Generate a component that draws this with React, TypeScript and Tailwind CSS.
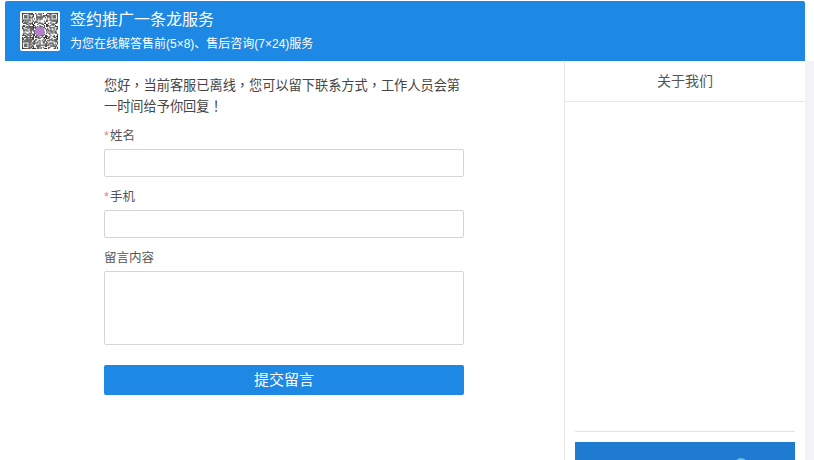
const QR_SIZE = 33;

function isFinder(x: number, y: number) {
  const inBox = (bx: number, by: number) => x >= bx && x < bx + 7 && y >= by && y < by + 7;
  return inBox(0, 0) || inBox(QR_SIZE - 7, 0) || inBox(0, QR_SIZE - 7);
}

function finderOn(x: number, y: number) {
  const lx = x >= QR_SIZE - 7 ? x - (QR_SIZE - 7) : x;
  const ly = y >= QR_SIZE - 7 ? y - (QR_SIZE - 7) : y;
  if (lx === 0 || lx === 6 || ly === 0 || ly === 6) return true;
  return lx >= 2 && lx <= 4 && ly >= 2 && ly <= 4;
}

// stand-in modules, the reference code is too blurry to read
function moduleOn(x: number, y: number) {
  const n = Math.sin(x * 12.9898 + y * 78.233) * 43758.5453;
  return n - Math.floor(n) < 0.55;
}

function QrCode() {
  const cells: { x: number; y: number }[] = [];
  for (let y = 0; y < QR_SIZE; y++) {
    for (let x = 0; x < QR_SIZE; x++) {
      const on = isFinder(x, y) ? finderOn(x, y) : moduleOn(x, y);
      if (on) cells.push({ x, y });
    }
  }
  return (
    <div className="h-10 w-10 shrink-0 rounded-[2px] bg-white p-[2px]">
      <svg viewBox="0 0 33 33" className="h-9 w-9 blur-[0.3px]">
        {cells.map((c) => (
          <rect key={`${c.x}-${c.y}`} x={c.x} y={c.y} width={1} height={1} fill="#2e2e2e" />
        ))}
        <rect x={12.5} y={13} width={8} height={7.5} rx={1.5} fill="#b57fd0" />
      </svg>
    </div>
  );
}

function Field({ label, required }: { label: string; required?: boolean }) {
  return (
    <div className="mb-[11px]">
      <label className="block h-[22px] text-[12.5px] leading-[18px] text-[#555]">
        {required && <span className="inline-block w-[6px] text-[#c98a8a]">*</span>}
        {label}
      </label>
      <input className="block h-7 w-[360px] rounded-[2px] border border-[#d5d5d9] bg-white" />
    </div>
  );
}

export default function App() {
  return (
    <div
      className="flex h-[460px] w-[814px] flex-col overflow-hidden bg-white pt-px"
      style={{ fontFamily: '"Liberation Sans", "Noto Sans CJK SC", sans-serif' }}
    >
      <div className="flex flex-1 flex-col pl-[5px]">
        <div className="flex min-h-0 flex-1 flex-col">
          <header className="mr-[9px] flex h-[60px] shrink-0 items-center gap-[10px] rounded-t-[2px] bg-[#1e88e5] pl-[15px] text-white">
            <QrCode />
            <div className="-mt-[2px]">
              <h1 className="text-[16px] leading-[22px] font-normal">签约推广一条龙服务</h1>
              <p className="mt-[5px] text-[12px] leading-4">
                为您在线解答售前(5×8)、售后咨询(7×24)服务
              </p>
            </div>
          </header>

          <div className="flex min-h-0 flex-1">
            <main className="w-[559px] shrink-0 pt-[13px] pl-[99px]">
              <p
                className="mb-[11px] w-[360px] text-[13.2px] leading-[21px] text-[#444]"
                style={{ fontFamily: '"Noto Sans CJK TC", sans-serif' }}
              >
                您好，当前客服已离线，您可以留下联系方式，工作人员会第一时间给予你回复！
              </p>
              <Field label="姓名" required />
              <Field label="手机" required />
              <label className="block h-[22px] text-[12.5px] leading-[18px] text-[#555]">留言内容</label>
              <textarea className="block h-[74px] w-[360px] resize-none rounded-[2px] border border-[#d5d5d9] bg-white" />
              <button className="mt-5 h-[30px] w-[360px] rounded-[2px] bg-[#1e88e5] text-[15px] text-white">
                提交留言
              </button>
            </main>

            <div className="flex flex-1 bg-[#f3f2f7]">
              <aside className="mr-[9px] flex flex-1 flex-col border-l border-[#e5e5e5] bg-white">
                <div className="h-[41px] shrink-0 border-b border-[#e5e5e5] pt-px text-center text-[14px] leading-[38px] text-[#555]">
                  关于我们
                </div>
                <div className="flex-1" />
                <div className="mx-[10px] mb-[10px] border-b border-[#e2e2e2]" />
                <div className="relative mx-[10px] h-[18px] shrink-0 overflow-hidden bg-[#1f7bcf]">
                  <span className="absolute top-4 left-[160px] h-3 w-3 rounded-full bg-[#6cc0f0]" />
                </div>
              </aside>
            </div>
          </div>
        </div>
      </div>
    </div>
  );
}
